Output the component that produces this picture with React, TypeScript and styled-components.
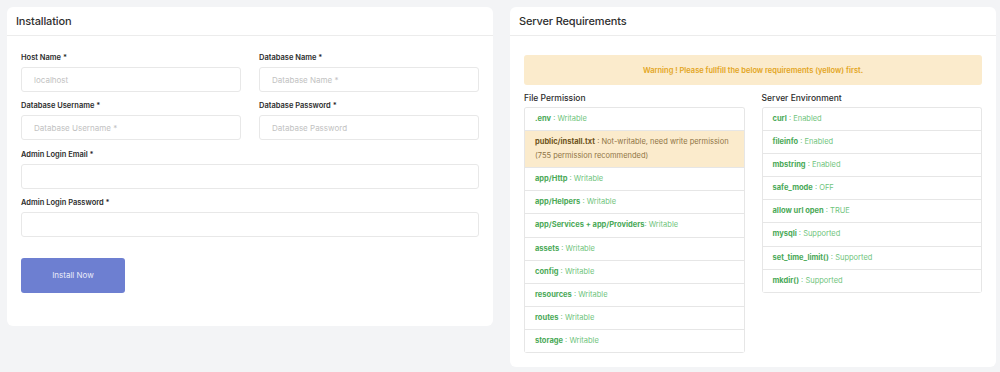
import styled, { createGlobalStyle } from 'styled-components';

const GlobalStyle = createGlobalStyle`
    * {
        box-sizing: border-box;
    }

    body {
        margin: 0;
        background: #f3f4f6;
        font-family: Inter, 'Noto Sans', sans-serif;
        color: #333;
    }
`;

const Page = styled.div`
    display: grid;
    grid-template-columns: 486px 486px;
    column-gap: 17px;
    align-items: start;
    padding: 7px 0 7px 7px;
    width: 1000px;
    height: 372px;
`;

const Card = styled.section`
    background: #fff;
    border-radius: 6px;
    overflow: hidden;
`;

const CardHeader = styled.header`
    height: 29px;
    display: flex;
    align-items: center;
    padding: 0 9px;
    border-bottom: 1px solid #ececec;
`;

const CardTitle = styled.h2`
    margin: 0;
    font-size: 11px;
    font-weight: 500;
    letter-spacing: -0.15px;
    color: #2f2f2f;
`;

const FormBody = styled.div`
    padding: 17px 14px 33px;
`;

const FormGrid = styled.div`
    display: grid;
    grid-template-columns: 1fr 1fr;
    column-gap: 18px;
`;

const FormGroup = styled.div<{ $wide?: boolean }>`
    grid-column: ${({ $wide }) => ($wide ? '1 / -1' : 'auto')};
    display: flex;
    flex-direction: column;
    margin-bottom: 9.25px;
`;

const Label = styled.label`
    font-size: 7.5px;
    font-weight: 600;
    line-height: 10px;
    color: #2b2b2b;
    margin-bottom: 4px;
`;

const Input = styled.input`
    height: 25px;
    border: 1px solid #e8e8e8;
    border-radius: 3px;
    padding: 0 12px;
    font-family: inherit;
    font-size: 8px;
    color: #333;
    outline: none;

    &::placeholder {
        color: #c2c2c2;
    }
`;

const InstallButton = styled.button`
    margin-top: 11.5px;
    width: 104px;
    height: 35px;
    border: none;
    border-radius: 3px;
    background: #6d7fd1;
    color: #e9ecfa;
    font-family: inherit;
    font-size: 8px;
`;

const RequirementsBody = styled.div`
    padding: 19px 14px 14px;
`;

const Warning = styled.div`
    height: 30px;
    display: flex;
    align-items: center;
    justify-content: center;
    background: #fbebcc;
    border-radius: 3px;
    color: #e3a521;
    font-size: 7.5px;
    font-weight: 600;
`;

const Columns = styled.div`
    display: grid;
    grid-template-columns: 1fr 1fr;
    column-gap: 17px;
    margin-top: 3px;
`;

const ColumnTitle = styled.h3`
    margin: 0;
    height: 19px;
    display: flex;
    align-items: center;
    font-size: 8.5px;
    font-weight: 500;
    color: #2b2b2b;
`;

const List = styled.ul`
    margin: 0;
    padding: 0;
    list-style: none;
    border: 1px solid #e6e6e6;
    border-bottom: none;
    border-radius: 3px;
    overflow: hidden;
`;

const Item = styled.li<{ $warn?: boolean }>`
    padding: 4px 10px;
    line-height: 14.1px;
    font-size: 7.5px;
    border-bottom: 1px solid #e6e6e6;
    background: ${({ $warn }) => ($warn ? '#fbebcc' : '#fff')};
    color: ${({ $warn }) => ($warn ? '#8f7445' : '#6fc47c')};

    b {
        font-weight: 700;
        color: ${({ $warn }) => ($warn ? '#6e5420' : '#4aa957')};
    }
`;

const fields = [
    { label: 'Host Name *', placeholder: 'localhost' },
    { label: 'Database Name *', placeholder: 'Database Name *' },
    { label: 'Database Username *', placeholder: 'Database Username *' },
    { label: 'Database Password *', placeholder: 'Database Password' },
    { label: 'Admin Login Email *', placeholder: '', wide: true },
    { label: 'Admin Login Password *', placeholder: '', wide: true },
];

const permissions = [
    { name: '.env', value: 'Writable' },
    {
        name: 'public/install.txt',
        value: 'Not-writable, need write permission (755 permission recommended)',
        warn: true,
    },
    { name: 'app/Http', value: 'Writable' },
    { name: 'app/Helpers', value: 'Writable' },
    { name: 'app/Services + app/Providers', value: 'Writable', tight: true },
    { name: 'assets', value: 'Writable' },
    { name: 'config', value: 'Writable' },
    { name: 'resources', value: 'Writable' },
    { name: 'routes', value: 'Writable' },
    { name: 'storage', value: 'Writable' },
];

const environment = [
    { name: 'curl', value: 'Enabled' },
    { name: 'fileinfo', value: 'Enabled' },
    { name: 'mbstring', value: 'Enabled' },
    { name: 'safe_mode', value: 'OFF' },
    { name: 'allow url open', value: 'TRUE' },
    { name: 'mysqli', value: 'Supported' },
    { name: 'set_time_limit()', value: 'Supported' },
    { name: 'mkdir()', value: 'Supported' },
];

export default function App() {
    return (
        <>
            <GlobalStyle />
            <Page>
                <Card>
                    <CardHeader>
                        <CardTitle>Installation</CardTitle>
                    </CardHeader>
                    <FormBody>
                        <FormGrid>
                            {fields.map((field) => (
                                <FormGroup key={field.label} $wide={field.wide}>
                                    <Label>{field.label}</Label>
                                    <Input placeholder={field.placeholder} />
                                </FormGroup>
                            ))}
                        </FormGrid>
                        <InstallButton>Install Now</InstallButton>
                    </FormBody>
                </Card>

                <Card>
                    <CardHeader>
                        <CardTitle>Server Requirements</CardTitle>
                    </CardHeader>
                    <RequirementsBody>
                        <Warning>Warning ! Please fullfill the below requirements (yellow) first.</Warning>
                        <Columns>
                            <div>
                                <ColumnTitle>File Permission</ColumnTitle>
                                <List>
                                    {permissions.map((item) => (
                                        <Item key={item.name} $warn={item.warn}>
                                            <b>{item.name}</b>
                                            {item.tight ? ': ' : ' : '}
                                            {item.value}
                                        </Item>
                                    ))}
                                </List>
                            </div>
                            <div>
                                <ColumnTitle>Server Environment</ColumnTitle>
                                <List>
                                    {environment.map((item) => (
                                        <Item key={item.name}>
                                            <b>{item.name}</b> : {item.value}
                                        </Item>
                                    ))}
                                </List>
                            </div>
                        </Columns>
                    </RequirementsBody>
                </Card>
            </Page>
        </>
    );
}
